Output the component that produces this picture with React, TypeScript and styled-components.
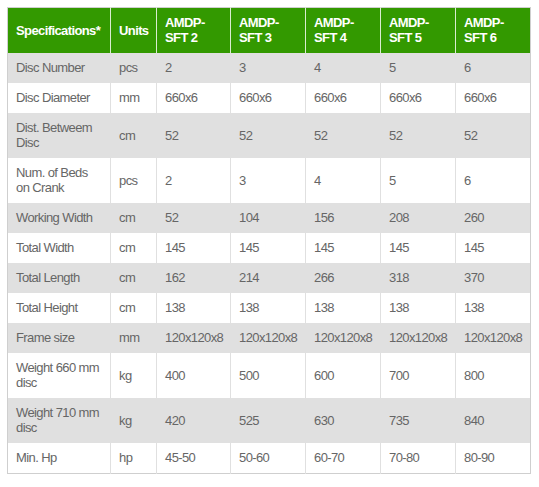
import * as React from 'react';
import styled, { createGlobalStyle } from 'styled-components';

const GlobalStyle = createGlobalStyle`
  body {
    margin: 7px;
    background: #fff;
    font-family: "Liberation Sans", Arial, sans-serif;
  }
`;

const Table = styled.table`
  width: 523px;
  border-collapse: collapse;
  table-layout: fixed;
  border: 1px solid #cfcfcf;
  font-size: 13px;
  line-height: 15px;
  letter-spacing: -0.6px;
`;

const HeadCell = styled.th`
  background: #339900;
  color: #fff;
  font-weight: bold;
  text-align: left;
  vertical-align: middle;
  padding: 7px 8px 8px 8px;
  border-right: 1px solid #d9ecd0;
  &:last-child {
    border-right: none;
  }
`;

const Row = styled.tr<{ $shaded: boolean }>`
  background: ${p => (p.$shaded ? '#e0e0e0' : '#fff')};
`;

const Cell = styled.td`
  color: #666;
  padding: 7px 8px 8px 8px;
  vertical-align: middle;
  border-left: 1px solid #e0e0e0;
  &:first-child {
    border-left: none;
  }
`;

const widths = [103, 46, 74, 75, 75, 75, 75];

const headers = [
  'Specifications*',
  'Units',
  'AMDP- SFT 2',
  'AMDP- SFT 3',
  'AMDP- SFT 4',
  'AMDP- SFT 5',
  'AMDP- SFT 6',
];

const rows: string[][] = [
  ['Disc Number', 'pcs', '2', '3', '4', '5', '6'],
  ['Disc Diameter', 'mm', '660x6', '660x6', '660x6', '660x6', '660x6'],
  ['Dist. Betweem Disc', 'cm', '52', '52', '52', '52', '52'],
  ['Num. of Beds on Crank', 'pcs', '2', '3', '4', '5', '6'],
  ['Working Width', 'cm', '52', '104', '156', '208', '260'],
  ['Total Width', 'cm', '145', '145', '145', '145', '145'],
  ['Total Length', 'cm', '162', '214', '266', '318', '370'],
  ['Total Height', 'cm', '138', '138', '138', '138', '138'],
  ['Frame size', 'mm', '120x120x8', '120x120x8', '120x120x8', '120x120x8', '120x120x8'],
  ['Weight 660 mm disc', 'kg', '400', '500', '600', '700', '800'],
  ['Weight 710 mm disc', 'kg', '420', '525', '630', '735', '840'],
  ['Min. Hp', 'hp', '45-50', '50-60', '60-70', '70-80', '80-90'],
];

export default function App() {
  return (
    <>
      <GlobalStyle />
      <Table>
        <colgroup>
          {widths.map((w, i) => (
            <col key={i} style={{ width: w }} />
          ))}
        </colgroup>
        <thead>
          <tr>
            {headers.map(h => (
              <HeadCell key={h}>{h}</HeadCell>
            ))}
          </tr>
        </thead>
        <tbody>
          {rows.map((r, i) => (
            <Row key={r[0]} $shaded={i % 2 === 0}>
              {r.map((c, j) => (
                <Cell key={j}>{c}</Cell>
              ))}
            </Row>
          ))}
        </tbody>
      </Table>
    </>
  );
}
